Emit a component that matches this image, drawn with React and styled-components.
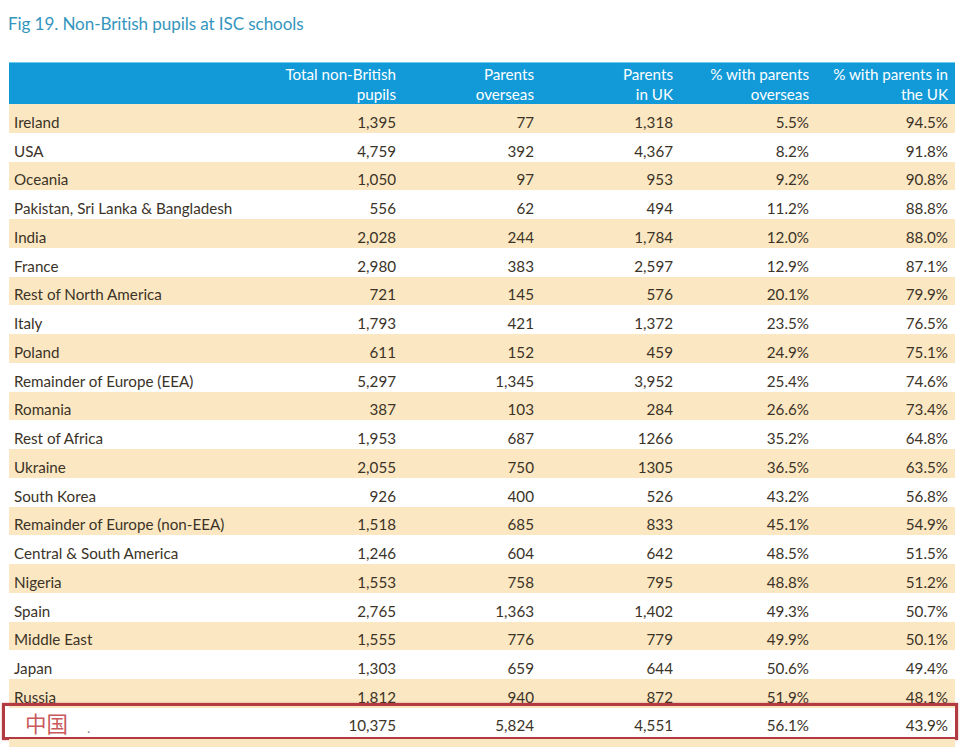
import React from "react";
import styled, { createGlobalStyle } from "styled-components";

const Global = createGlobalStyle`
  html, body { margin: 0; padding: 0; background: #ffffff; }
  body { font-family: Lato, "Noto Sans", "Noto Sans CJK SC", sans-serif; }
`;

const Page = styled.div`
  width: 960px;
  height: 747px;
  overflow: hidden;
  padding: 0 5px 0 9px;
  box-sizing: border-box;
`;

const Title = styled.h1`
  margin: 13px 0 0 -1px;
  height: 22px;
  font-size: 17.1px;
  font-weight: 400;
  color: #3596bd;
  line-height: 22px;
  letter-spacing: -0.1px;
`;

const Table = styled.div`
  margin-top: 27px;
  display: flex;
  flex-direction: column;
`;

const cols = "256px 138px 138px 139px 136px 139px";

const HeadRow = styled.div`
  display: grid;
  grid-template-columns: ${cols};
  height: 42px;
  background: #129ad8;
  border-top: 1px solid #6ccdf0;
  box-sizing: border-box;
  color: #ffffff;
  font-size: 15.2px;
  line-height: 20px;
  align-items: center;
`;

const HeadCell = styled.div`
  text-align: right;
  padding-right: 7px;
`;

const Row = styled.div`
  position: relative;
  display: grid;
  grid-template-columns: ${cols};
  height: ${(p) => p.$h || 28.75}px;
  box-sizing: border-box;
  padding-top: ${(p) => (p.$marked ? 4 : 7)}px;
  background: ${(p) => (p.$shade ? "#fbe8c3" : "#ffffff")};
  align-items: center;
  font-size: 15.2px;
  color: #3b3327;
  ${(p) =>
    p.$marked &&
    `
    &::after {
      content: "";
      position: absolute;
      left: -7px;
      right: -3px;
      top: -5px;
      bottom: -1px;
      border: 3px solid #b33a40;
      box-shadow: 0 0 2px rgba(179,58,64,0.5);
      pointer-events: none;
    }
  `}
`;

const NameCell = styled.div`
  padding-left: 5px;
  white-space: nowrap;
`;

const NumCell = styled.div`
  text-align: right;
  padding-right: 7px;
`;

const ChinaName = styled.div`
  padding-left: 16px;
  font-family: "Noto Sans CJK SC", sans-serif;
  font-size: 21.5px;
  color: #c95a5b;
  display: flex;
  align-items: center;
  gap: 19px;
  margin-top: -6px;
`;

const Dot = styled.span`
  font-size: 12px;
  color: #7a7a7a;
  margin-top: 10px;
`;

const data = [
  ["Ireland", "1,395", "77", "1,318", "5.5%", "94.5%"],
  ["USA", "4,759", "392", "4,367", "8.2%", "91.8%"],
  ["Oceania", "1,050", "97", "953", "9.2%", "90.8%"],
  ["Pakistan, Sri Lanka & Bangladesh", "556", "62", "494", "11.2%", "88.8%"],
  ["India", "2,028", "244", "1,784", "12.0%", "88.0%"],
  ["France", "2,980", "383", "2,597", "12.9%", "87.1%"],
  ["Rest of North America", "721", "145", "576", "20.1%", "79.9%"],
  ["Italy", "1,793", "421", "1,372", "23.5%", "76.5%"],
  ["Poland", "611", "152", "459", "24.9%", "75.1%"],
  ["Remainder of Europe (EEA)", "5,297", "1,345", "3,952", "25.4%", "74.6%"],
  ["Romania", "387", "103", "284", "26.6%", "73.4%"],
  ["Rest of Africa", "1,953", "687", "1266", "35.2%", "64.8%"],
  ["Ukraine", "2,055", "750", "1305", "36.5%", "63.5%"],
  ["South Korea", "926", "400", "526", "43.2%", "56.8%"],
  ["Remainder of Europe (non-EEA)", "1,518", "685", "833", "45.1%", "54.9%"],
  ["Central & South America", "1,246", "604", "642", "48.5%", "51.5%"],
  ["Nigeria", "1,553", "758", "795", "48.8%", "51.2%"],
  ["Spain", "2,765", "1,363", "1,402", "49.3%", "50.7%"],
  ["Middle East", "1,555", "776", "779", "49.9%", "50.1%"],
  ["Japan", "1,303", "659", "644", "50.6%", "49.4%"],
  ["Russia", "1,812", "940", "872", "51.9%", "48.1%"],
];

export default function App() {
  return (
    <Page>
      <Global />
      <Title>Fig 19. Non-British pupils at ISC schools</Title>
      <Table>
        <HeadRow>
          <div />
          <HeadCell>Total non-British<br />pupils</HeadCell>
          <HeadCell>Parents<br />overseas</HeadCell>
          <HeadCell>Parents<br />in UK</HeadCell>
          <HeadCell>% with parents<br />overseas</HeadCell>
          <HeadCell>% with parents in<br />the UK</HeadCell>
        </HeadRow>
        {data.map((r, i) => (
          <Row key={r[0]} $shade={i % 2 === 0}>
            <NameCell>{r[0]}</NameCell>
            {r.slice(1).map((v, j) => (
              <NumCell key={j}>{v}</NumCell>
            ))}
          </Row>
        ))}
        <Row $marked $h={31}>
          <ChinaName>
            中国<Dot>.</Dot>
          </ChinaName>
          <NumCell>10,375</NumCell>
          <NumCell>5,824</NumCell>
          <NumCell>4,551</NumCell>
          <NumCell>56.1%</NumCell>
          <NumCell>43.9%</NumCell>
        </Row>
        <Row $shade $h={20} />
      </Table>
    </Page>
  );
}
